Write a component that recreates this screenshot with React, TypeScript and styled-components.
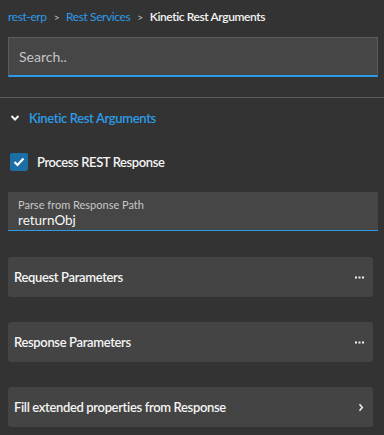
import React from 'react';
import styled, { createGlobalStyle } from 'styled-components';

const GlobalStyle = createGlobalStyle`
  html, body {
    margin: 0;
    padding: 0;
    background: #333333;
  }
  body {
    font-family: Lato, "Open Sans", sans-serif;
    color: #f2f2f2;
  }
`;

export default function App() {
  return (
    <>
      <GlobalStyle />
      <Page>
        <Breadcrumb>
          <Crumb>rest-erp</Crumb>
          <Separator>&gt;</Separator>
          <Crumb>Rest Services</Crumb>
          <Separator>&gt;</Separator>
          <Current>Kinetic Rest Arguments</Current>
        </Breadcrumb>
        <SearchBox placeholder="Search.." />
        <Divider />
        <Section>
          <SectionHeader>
            <svg width="10" height="8" viewBox="0 0 10 8">
              <path d="M1.5 2 L5 5.5 L8.5 2" stroke="#f2f2f2" strokeWidth="2" fill="none" />
            </svg>
            <SectionTitle>Kinetic Rest Arguments</SectionTitle>
          </SectionHeader>
          <CheckRow>
            <CheckBox>
              <svg width="12" height="10" viewBox="0 0 12 10">
                <path d="M1.5 5 L4.5 8 L10.5 1.5" stroke="#fff" strokeWidth="2.2" fill="none" />
              </svg>
            </CheckBox>
            <CheckLabel>Process REST Response</CheckLabel>
          </CheckRow>
          <Field>
            <FieldLabel>Parse from Response Path</FieldLabel>
            <FieldValue>returnObj</FieldValue>
          </Field>
          <Cards>
            <Card>
              <CardTitle>Request Parameters</CardTitle>
              <Dots />
            </Card>
            <Card>
              <CardTitle>Response Parameters</CardTitle>
              <Dots />
            </Card>
            <Card>
              <CardTitle>Fill extended properties from Response</CardTitle>
              <svg width="6" height="9" viewBox="0 0 6 9">
                <path d="M1.5 1.2 L4.3 4.5 L1.5 7.8" stroke="#f2f2f2" strokeWidth="1.5" fill="none" />
              </svg>
            </Card>
          </Cards>
        </Section>
      </Page>
    </>
  );
}

function Dots() {
  return (
    <svg width="9" height="3" viewBox="0 0 9 3">
      <rect x="0" y="0.5" width="2" height="2" fill="#f2f2f2" />
      <rect x="3.5" y="0.5" width="2" height="2" fill="#f2f2f2" />
      <rect x="7" y="0.5" width="2" height="2" fill="#f2f2f2" />
    </svg>
  );
}

const Page = styled.div`
  display: flex;
  flex-direction: column;
  width: 384px;
  height: 435px;
  overflow: hidden;
`;

const Breadcrumb = styled.div`
  display: flex;
  align-items: center;
  gap: 7px;
  padding: 8px 8px 0;
  height: 17px;
  font-size: 12px;
  letter-spacing: -0.4px;
`;

const Crumb = styled.span`
  color: #2e9be8;
`;

const Separator = styled.span`
  color: #c8c8c8;
  font-size: 10px;
`;

const Current = styled.span`
  color: #f4f4f4;
  font-weight: 600;
`;

const SearchBox = styled.input`
  margin: 12px 6px 0 8px;
  height: 40px;
  box-sizing: border-box;
  background: #464646;
  border: 1px solid #5c5c5c;
  border-bottom: 2px solid #2e9be8;
  padding: 0 10px;
  font-family: Lato, "Open Sans", sans-serif;
  font-size: 14px;
  color: #f2f2f2;
  outline: none;

  &::placeholder {
    color: #c4c4c4;
  }
`;

const Divider = styled.div`
  margin-top: 20px;
  height: 1px;
  background: #5a5a5a;
`;

const Section = styled.div`
  display: flex;
  flex-direction: column;
  padding: 0 6px 0 8px;
`;

const SectionHeader = styled.div`
  display: flex;
  align-items: center;
  gap: 9px;
  height: 40px;
  padding-left: 2px;
`;

const SectionTitle = styled.span`
  color: #2e9be8;
  font-size: 13px;
  font-weight: 600;
  letter-spacing: -0.35px;
`;

const CheckRow = styled.div`
  display: flex;
  align-items: center;
  gap: 9px;
  margin-top: 15px;
  padding-left: 2px;
`;

const CheckBox = styled.div`
  width: 18px;
  height: 18px;
  border-radius: 2px;
  background: #1b6ea6;
  display: flex;
  align-items: center;
  justify-content: center;
`;

const CheckLabel = styled.span`
  font-size: 13px;
  font-weight: 600;
  letter-spacing: -0.4px;
  color: #f4f4f4;
`;

const Field = styled.div`
  margin-top: 21px;
  height: 39px;
  box-sizing: border-box;
  background: #464646;
  border-bottom: 1px solid #2e9be8;
  padding: 6px 10px 0;
  display: flex;
  flex-direction: column;
`;

const FieldLabel = styled.span`
  font-size: 11px;
  color: #c8c8c8;
  line-height: 14px;
`;

const FieldValue = styled.span`
  font-size: 13.5px;
  color: #f6f6f6;
  line-height: 17px;
`;

const Cards = styled.div`
  display: flex;
  flex-direction: column;
  gap: 25px;
  margin-top: 26px;
  margin-right: 5px;
`;

const Card = styled.div`
  display: flex;
  align-items: center;
  justify-content: space-between;
  height: 40px;
  padding: 0 9px 0 6px;
  background: #444444;
  border-radius: 3px;
`;

const CardTitle = styled.span`
  font-size: 13px;
  font-weight: 600;
  letter-spacing: -0.35px;
  color: #f4f4f4;
`;
